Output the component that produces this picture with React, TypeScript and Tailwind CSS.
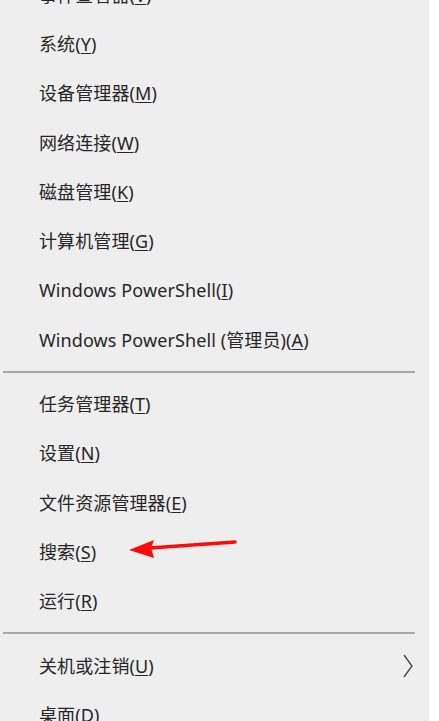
import React from 'react';

type Item = { label: string; key: string; submenu?: boolean } | { separator: true };

const items: Item[] = [
  { label: '事件查看器', key: 'V' },
  { label: '系统', key: 'Y' },
  { label: '设备管理器', key: 'M' },
  { label: '网络连接', key: 'W' },
  { label: '磁盘管理', key: 'K' },
  { label: '计算机管理', key: 'G' },
  { label: 'Windows PowerShell', key: 'I' },
  { label: 'Windows PowerShell (管理员)', key: 'A' },
  { separator: true },
  { label: '任务管理器', key: 'T' },
  { label: '设置', key: 'N' },
  { label: '文件资源管理器', key: 'E' },
  { label: '搜索', key: 'S' },
  { label: '运行', key: 'R' },
  { separator: true },
  { label: '关机或注销', key: 'U', submenu: true },
  { label: '桌面', key: 'D' },
];

const App = () => {
  return (
    <div
      className="relative flex h-[721px] w-[439px] overflow-hidden bg-white"
      style={{ fontFamily: '"Noto Sans", "Noto Sans CJK SC", sans-serif' }}
    >
      <div className="flex w-[429px] flex-col bg-[#eeeeee]">
        <div className="mt-[-30px] flex flex-col">
          {items.map((item, i) =>
            'separator' in item ? (
              <div key={i} className="flex h-[15px] items-center pl-[3px] pr-[14px]">
                <div className="h-[2px] w-full bg-[#a8a8a8]" />
              </div>
            ) : (
              <div key={i} className="flex h-[49.3px] items-center justify-between pl-[39px] pr-[15px]">
                <span className="text-[18px] leading-none tracking-[0.1px] text-[#262626]">
                  {item.label}(<span className="underline underline-offset-2">{item.key}</span>)
                </span>
                {item.submenu && (
                  <svg width="12" height="24" viewBox="0 0 12 24" className="text-[#444]">
                    <path d="M2 1 L10 12 L2 23" fill="none" stroke="currentColor" strokeWidth="1.3" />
                  </svg>
                )}
              </div>
            )
          )}
        </div>
      </div>
      {/* red annotation arrow */}
      <svg className="absolute left-0 top-0" width="439" height="721" viewBox="0 0 439 721">
        <path d="M150 548 L235 542" stroke="#ff0a0a" strokeWidth="3.5" strokeLinecap="round" fill="none" />
        <path d="M129 550 L154 540 L151 548 L154 558 Z" fill="#ff0a0a" />
      </svg>
    </div>
  );
};

export default App;
